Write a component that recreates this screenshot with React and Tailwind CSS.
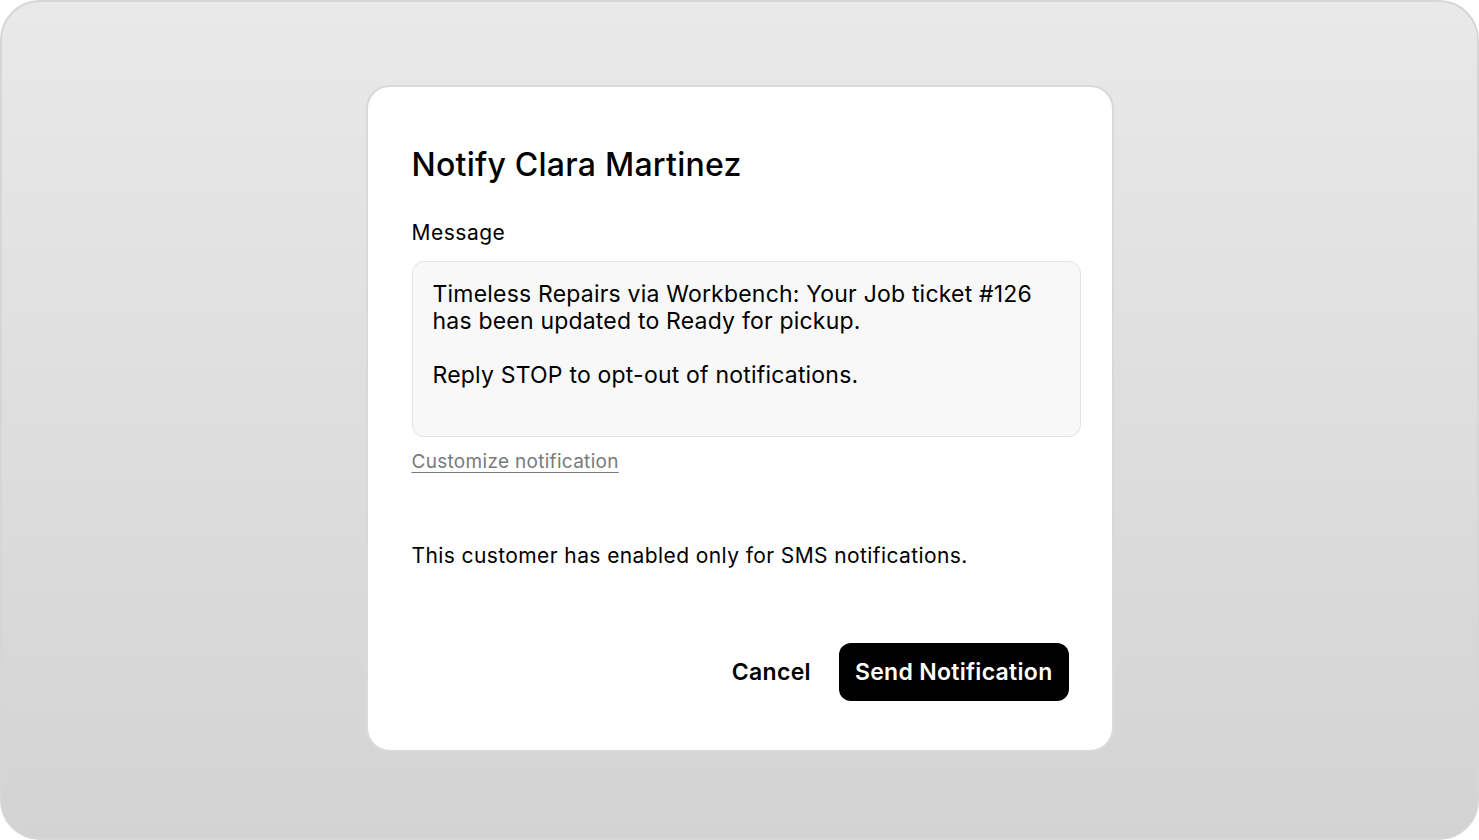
import React from 'react';

export default function App() {
  return (
    <div className="w-[1479px] h-[840px] bg-white" style={{ fontFamily: 'Inter, "Noto Sans", sans-serif' }}>
      <div className="w-full h-full rounded-[40px] border-2 border-[#d6d6d6] bg-gradient-to-b from-[#e9e9e9] to-[#d3d3d3] flex justify-center pt-[83px]">
        {/* dialog */}
        <div className="w-[748px] h-[667px] bg-white rounded-[24px] border-2 border-[#d9d9d9] pl-[44px] pr-[32px] pt-[60px] flex flex-col">
          <h1 className="text-[32px] leading-[36px] font-medium tracking-[0.25px] text-black">Notify Clara Martinez</h1>

          <label className="mt-[37px] text-[21px] leading-[26px] tracking-[0.5px] text-black">Message</label>

          <div className="mt-[15px] w-[669px] h-[176px] rounded-[12px] border border-[#e3e3e3] bg-[#f8f8f8] px-[20px] pt-[19px] text-[23px] leading-[27px] tracking-[0.2px] text-black">
            <p>Timeless Repairs via Workbench: Your Job ticket #126<br />has been updated to Ready for pickup.</p>
            <p className="mt-[27px]">Reply STOP to opt-out of notifications.</p>
          </div>

          <a className="mt-[12px] self-start text-[19px] leading-[26px] tracking-[0.3px] text-[#7a7a7a] underline underline-offset-[4px] decoration-1">
            Customize notification
          </a>

          <p className="mt-[68px] text-[21px] leading-[26px] tracking-[0.4px] text-black">
            This customer has enabled only for SMS notifications.
          </p>

          <div className="mt-[74px] flex items-center justify-end gap-[28px] pr-[11px]">
            <button className="text-[23px] font-semibold tracking-[0.3px] text-black">Cancel</button>
            <button className="h-[58px] px-[16px] rounded-[12px] bg-black text-white text-[23px] font-semibold tracking-[0.3px]">
              Send Notification
            </button>
          </div>
        </div>
      </div>
    </div>
  );
}
